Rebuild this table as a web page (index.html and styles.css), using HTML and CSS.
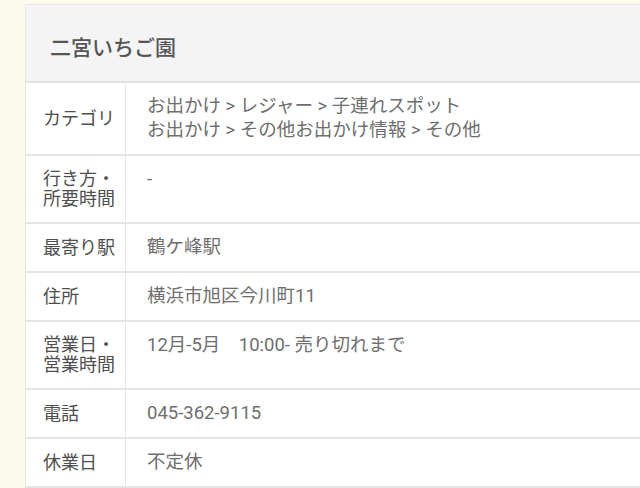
FILE: index.html
```html
<!DOCTYPE html>
<html>
<head>
    <meta charset="utf-8">
    <title>二宮いちご園</title>
    <link rel="stylesheet" href="styles.css">
</head>
<body>
    <div class="spot">
        <h2 class="spot-title">二宮いちご園</h2>
        <table class="spot-info">
            <tr>
                <th>カテゴリ</th>
                <td>お出かけ &gt; レジャー &gt; 子連れスポット<br>お出かけ &gt; その他お出かけ情報 &gt; その他</td>
            </tr>
            <tr>
                <th>行き方・<br>所要時間</th>
                <td>-</td>
            </tr>
            <tr>
                <th>最寄り駅</th>
                <td>鶴ケ峰駅</td>
            </tr>
            <tr>
                <th>住所</th>
                <td>横浜市旭区今川町11</td>
            </tr>
            <tr>
                <th>営業日・<br>営業時間</th>
                <td>12月-5月　10:00- 売り切れまで</td>
            </tr>
            <tr>
                <th>電話</th>
                <td>045-362-9115</td>
            </tr>
            <tr>
                <th>休業日</th>
                <td>不定休</td>
            </tr>
        </table>
    </div>
</body>
</html>
```

FILE: styles.css
```css
/* spot detail */
body {
    font-family: Roboto, "Noto Sans CJK JP", sans-serif;
    margin: 0;
    padding: 4px 0 0 25px;
    background: #fbfaec;
    overflow: hidden;
}

.spot {
    width: 720px;
    background: #fff;
    border-top: 1px solid #e6e6e2;
    border-left: 1px solid #e6e6e2;
}

.spot-title {
    margin: 0;
    padding: 28px 24px 18px;
    background: #f4f4f4;
    border-bottom: 2px solid #e2e2e2;
    color: #555;
    font-size: 21px;
    font-weight: 500;
    line-height: 30px;
}

.spot-info {
    width: 100%;
    border-collapse: collapse;
    table-layout: fixed;
}

.spot-info th {
    width: 82px;
    padding: 13px 0 13px 17px;
    border-right: 1px solid #e8e8e8;
    border-bottom: 2px solid #e4e4e4;
    color: #4e4e4e;
    font-size: 18px;
    font-weight: 400;
    line-height: 20px;
    text-align: left;
    vertical-align: middle;
    white-space: nowrap;
}

.spot-info td {
    padding: 11px 21px 12px;
    border-bottom: 2px solid #e4e4e4;
    color: #6e6e6e;
    font-size: 18.5px;
    line-height: 24px;
    vertical-align: top;
}
```
